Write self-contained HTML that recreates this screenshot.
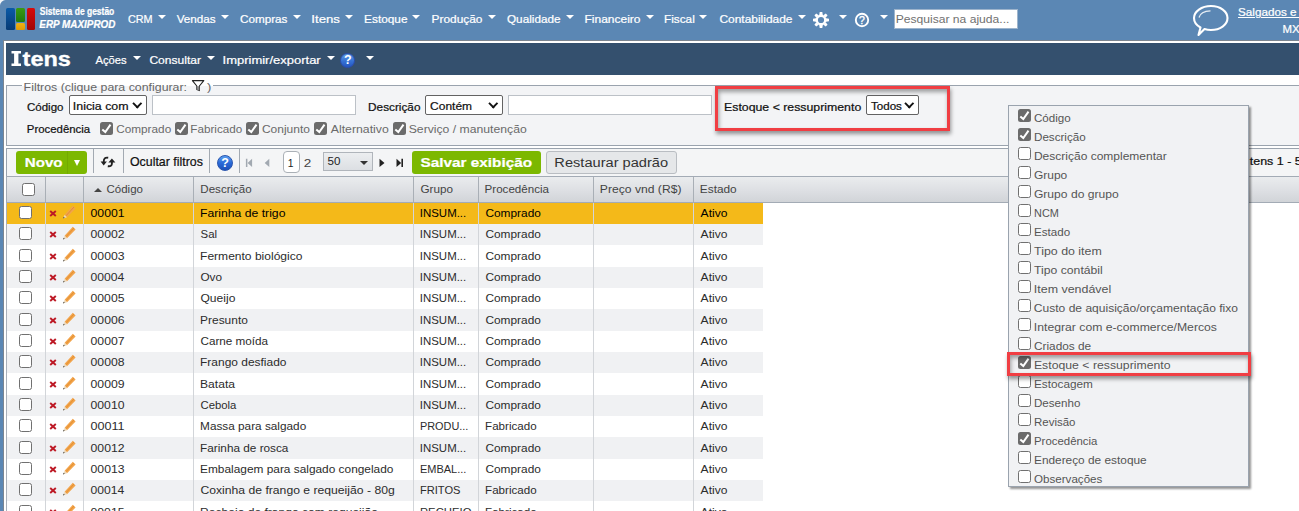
<!DOCTYPE html>
<html><head><meta charset="utf-8"><title>Itens</title><style>*{box-sizing:border-box;margin:0;padding:0}
html,body{width:1299px;height:511px;overflow:hidden;background:#5b87b4;font-family:"Liberation Sans",sans-serif;font-size:12px;color:#222}
span.x{z-index:3;position:absolute;white-space:nowrap;line-height:20px;transform-origin:0 50%;display:block}
#top{position:absolute;left:0;top:0;width:1299px;height:41px;background:#5b87b4}
#corner{position:absolute;left:0;top:0;width:6px;height:6px;background:radial-gradient(circle at 6px 6px,#5b87b4 5.5px,#f4f6f8 6.5px)}
.lg{position:absolute;border-radius:1.5px}
.tri{position:absolute;width:0;height:0;border-left:4.25px solid transparent;border-right:4.25px solid transparent;border-top:4.5px solid #fff}
#search{position:absolute;left:894px;top:8.8px;width:124px;height:20px;background:#fff;border:1px solid #9db4cc}
#panel{position:absolute;left:3px;top:40px;width:1300px;height:480px;background:#fff;border:1px solid #7c8590}
#hdr{position:absolute;left:6px;top:43px;width:1293px;height:32px;background:#34506e}
.qi{position:absolute;width:15.4px;height:15.4px;border-radius:50%;background:linear-gradient(#5e9ce4,#3672d4 55%,#2456c0);border:1px solid #2a4eb0;}
.qi:after{content:"?";position:absolute;left:0;top:0;width:13.4px;text-align:center;color:#fff;font-weight:bold;font-size:12.5px;line-height:13.6px}
.qi.big{width:16px;height:16px;border:1px solid #2a55ae;background:linear-gradient(#5b9ff0,#2a6ad8 50%,#1c50b8)}
.qi.big:after{width:14px;font-size:12.5px;line-height:14.5px}
#fs{position:absolute;left:6px;top:85px;width:1300px;height:61px;border:1px solid #9aa3ae;background:#f3f4f6}
#legend{position:absolute;left:22px;top:78px;width:191px;height:16px;background:linear-gradient(#fff 8px,#f3f4f6 8px)}
.sel{position:absolute;height:20px;border:1px solid #636363;border-radius:2px;background:#fff}
.sel i{position:absolute;right:5.4px;top:4.1px;width:6.5px;height:6.5px;border-right:2.3px solid #111;border-bottom:2.3px solid #111;transform:rotate(45deg)}
.inp{position:absolute;height:19.5px;border:1px solid #bcc1c7;background:#fff}
.red{z-index:4;position:absolute;border:3px solid #f03e43;box-shadow:1px 3px 4px rgba(0,0,0,.4),inset 1px 3px 4px rgba(0,0,0,.36)}
.cb{z-index:2;position:absolute;width:13px;height:13px;border:1.2px solid #707070;border-radius:2.5px;background:#fff}
.cbk{z-index:2;position:absolute;width:13px;height:13px;border-radius:2.5px;background:#6b6b6b}
.cbk svg{position:absolute;left:0;top:0}
#tb{position:absolute;left:6px;top:148px;width:1300px;height:29px;background:#f4f5f6;border-top:1px solid #9aa3ae;border-left:1px solid #9aa3ae}
#novo{position:absolute;left:16px;top:151px;width:71px;height:23px;border-radius:3px;background:#7cb800}
#novo b{position:absolute;left:51px;top:0px;width:1px;height:23px;background:#74aa00}
#novo em{position:absolute;left:57.7px;top:9.2px;border-left:3.2px solid transparent;border-right:3.2px solid transparent;border-top:6px solid #fff}
.vsep{position:absolute;top:149px;width:1px;height:24px;background:#a3aab2}
#pg1{position:absolute;left:283px;top:151px;width:17px;height:22px;border:1px solid #aab0b6;border-radius:4px;background:#fff}
#psel{position:absolute;left:323px;top:152px;width:50px;height:19px;border:1px solid #b0b5bb;background:linear-gradient(#eceef0,#dcdfe3)}
#psel i{position:absolute;right:4.5px;top:8px;border-left:4.2px solid transparent;border-right:4.2px solid transparent;border-top:4.2px solid #333}
#salvar{position:absolute;left:412px;top:151px;width:129px;height:23px;border-radius:3px;background:#7cb800}
#rest{position:absolute;left:546px;top:151px;width:131px;height:23px;border-radius:3px;background:#e5e7e9;border:1px solid #b9bdc2}
#gh{position:absolute;left:6px;top:176px;width:1300px;height:27px;background:linear-gradient(#eaecee,#dddfe3 55%,#d1d4d8);border-top:1px solid #a3abb5;border-bottom:1px solid #a3abb5;border-left:1px solid #a3abb5}
.hsep{position:absolute;top:177px;width:1px;height:25px;background:#a9afb6}
.upt{position:absolute;border-left:4.4px solid transparent;border-right:4.4px solid transparent;border-bottom:4.5px solid #444}
.row{position:absolute;left:7px;width:756px}
.sel0{background:#f4b919}
.alt{background:#f0f1f3}
.wht{background:#fff}
svg.x,svg.pen{position:absolute}
.rsep{position:absolute;top:203px;width:1px;height:320px;background:#d2d5d9}
#pop{z-index:1;position:absolute;left:1008px;top:105px;width:241px;height:382px;background:#f1f2f4;border:1px solid #9aa3ae;box-shadow:2px 2px 2px rgba(0,0,0,.42)}
</style></head><body>
<div id="top"></div><div id="corner"></div>
<div class="lg" style="left:6px;top:8px;width:9px;height:22px;background:linear-gradient(#0a5aa8,#073a74)"></div>
<div class="lg" style="left:16px;top:8px;width:9px;height:14px;background:linear-gradient(#3a9a12,#1f7a0c)"></div>
<div class="lg" style="left:16px;top:23px;width:9px;height:7px;background:linear-gradient(#f0b012,#e09a08)"></div>
<div class="lg" style="left:26.5px;top:8px;width:8.5px;height:22px;background:linear-gradient(#d80a0a,#a00606)"></div>
<div class="tri" style="left:158px;top:15px;"></div>
<div class="tri" style="left:221px;top:15px;"></div>
<div class="tri" style="left:292.5px;top:15px;"></div>
<div class="tri" style="left:345px;top:15px;"></div>
<div class="tri" style="left:412px;top:15px;"></div>
<div class="tri" style="left:487.5px;top:15px;"></div>
<div class="tri" style="left:565.5px;top:15px;"></div>
<div class="tri" style="left:645.5px;top:15px;"></div>
<div class="tri" style="left:699px;top:15px;"></div>
<div class="tri" style="left:797.5px;top:15px;"></div>
<svg style="position:absolute;left:812px;top:10.9px" width="18" height="18" viewBox="-9 -9 18 18"><circle r="4.25" fill="none" stroke="#fff" stroke-width="2.3"/><g fill="#fff"><path d="M-1.75 -5L-1.3 -8H1.3L1.75 -5Z" transform="rotate(0)"/><path d="M-1.75 -5L-1.3 -8H1.3L1.75 -5Z" transform="rotate(45)"/><path d="M-1.75 -5L-1.3 -8H1.3L1.75 -5Z" transform="rotate(90)"/><path d="M-1.75 -5L-1.3 -8H1.3L1.75 -5Z" transform="rotate(135)"/><path d="M-1.75 -5L-1.3 -8H1.3L1.75 -5Z" transform="rotate(180)"/><path d="M-1.75 -5L-1.3 -8H1.3L1.75 -5Z" transform="rotate(225)"/><path d="M-1.75 -5L-1.3 -8H1.3L1.75 -5Z" transform="rotate(270)"/><path d="M-1.75 -5L-1.3 -8H1.3L1.75 -5Z" transform="rotate(315)"/></g></svg>
<div class="tri" style="left:838.5px;top:15px;"></div>
<svg style="position:absolute;left:854px;top:12px" width="16" height="16" viewBox="0 0 16 16"><circle cx="8" cy="8" r="6.2" fill="none" stroke="#fff" stroke-width="1.9"/><text x="8" y="11.6" font-family="Liberation Sans" font-size="10.5" fill="#fff" stroke="#fff" stroke-width=".35" text-anchor="middle">?</text></svg>
<div class="tri" style="left:879.6px;top:15px;"></div>
<div id="search"></div>
<svg style="position:absolute;left:1192px;top:4px" width="38" height="34" viewBox="0 0 38 34"><path d="M19 2C28.5 2 35.5 7.5 35.5 14C35.5 21 28 26 19 26C16.5 26 14.5 25.7 12.5 25L6.5 31L8.5 23.5C4.3 21.2 2 17.8 2 14C2 7.5 9.5 2 19 2Z" fill="none" stroke="#fff" stroke-width="2.1" stroke-linejoin="round"/><path d="M7 13.5C8 9.5 12.5 7 18.5 6.8" fill="none" stroke="#fff" stroke-width="1.3" opacity=".85"/></svg>
<div id="panel"></div><div id="hdr"></div>
<svg style="position:absolute;left:10px;top:49px" width="13" height="19" viewBox="0 0 13 19"><path d="M1.5 1.9h9.5v2.7h-2.6v9.8h2.6v2.7h-9.5v-2.7h2.6v-9.8h-2.6z" fill="#fff"/></svg>
<div class="tri" style="left:133px;top:55.7px;"></div>
<div class="tri" style="left:206.5px;top:55.7px;"></div>
<div class="tri" style="left:326.7px;top:55.7px;"></div>
<div class="tri" style="left:365.6px;top:55.7px;"></div>
<div class="qi" style="left:340px;top:53px;"></div>
<div id="fs"></div>
<div id="legend"></div>
<svg style="position:absolute;left:191px;top:79px;z-index:3" width="14" height="13" viewBox="0 0 14 13"><path d="M1.4 1.6h11.4L8.4 7v4.6L5.8 10.6V7Z" fill="none" stroke="#222" stroke-width="1.1" stroke-linejoin="round"/><path d="M5.8 7.2h2.6v4.4L5.8 10.6Z" fill="#888"/></svg>
<div class="sel" style="left:69px;top:95px;width:78px;"><i></i></div>
<div class="inp" style="left:152px;top:95px;width:204px;"></div>
<div class="sel" style="left:425px;top:95px;width:78px;"><i></i></div>
<div class="inp" style="left:508px;top:95px;width:204px;"></div>
<div class="sel" style="left:866px;top:95px;width:53px;"><i></i></div>
<div class="cbk" style="left:100px;top:122px;"><svg width="13" height="13" viewBox="0 0 13 13"><path d="M2.3 7.4L5.3 10L10.5 2.6" fill="none" stroke="#fff" stroke-width="2"/></svg></div>
<div class="cbk" style="left:175px;top:122px;"><svg width="13" height="13" viewBox="0 0 13 13"><path d="M2.3 7.4L5.3 10L10.5 2.6" fill="none" stroke="#fff" stroke-width="2"/></svg></div>
<div class="cbk" style="left:245.5px;top:122px;"><svg width="13" height="13" viewBox="0 0 13 13"><path d="M2.3 7.4L5.3 10L10.5 2.6" fill="none" stroke="#fff" stroke-width="2"/></svg></div>
<div class="cbk" style="left:314px;top:122px;"><svg width="13" height="13" viewBox="0 0 13 13"><path d="M2.3 7.4L5.3 10L10.5 2.6" fill="none" stroke="#fff" stroke-width="2"/></svg></div>
<div class="cbk" style="left:393px;top:122px;"><svg width="13" height="13" viewBox="0 0 13 13"><path d="M2.3 7.4L5.3 10L10.5 2.6" fill="none" stroke="#fff" stroke-width="2"/></svg></div>
<div id="tb"></div>
<div id="novo"><b></b><em></em></div>
<div class="vsep" style="left:93px"></div>
<div class="vsep" style="left:123px"></div>
<div class="vsep" style="left:209px"></div>
<div class="vsep" style="left:239px"></div>
<svg style="position:absolute;left:100px;top:156px" width="17" height="12" viewBox="0 0 17 12"><g fill="none" stroke="#222" stroke-width="1.9"><path d="M8.2 1.7C5 1.2 3.7 2.6 3.7 6"/><path d="M11.9 6v1.5C11.9 9.6 10.6 10.6 7.8 10.2"/></g><path d="M0.6 5.4h6.3L3.7 9.4Z M8.4 6.6h7L11.9 2.6Z" fill="#222"/></svg>
<div class="qi big" style="left:217px;top:155px;"></div>
<svg style="position:absolute;left:244px;top:158px" width="30" height="10" viewBox="0 0 30 10"><path d="M1.9 0.8h1.5v8.2H1.9Z M8.1 0.8v8.2L3.6 4.9Z M25.3 0.8v8.2L20.7 4.9Z" fill="#a2a9b1"/></svg>
<div id="pg1"></div>
<div id="psel"><i></i></div>
<svg style="position:absolute;left:379px;top:158px" width="30" height="10" viewBox="0 0 30 10"><path d="M0.5 0.8v8.2L5.5 4.9Z M17.5 0.8v8.2L22.2 4.9Z M22.4 0.8h1.6v8.2h-1.6Z" fill="#222"/></svg>
<div id="salvar"></div>
<div id="rest"></div>
<div id="gh"></div>
<div class="hsep" style="left:45px"></div>
<div class="hsep" style="left:83px"></div>
<div class="hsep" style="left:193px"></div>
<div class="hsep" style="left:413px"></div>
<div class="hsep" style="left:478px"></div>
<div class="hsep" style="left:593px"></div>
<div class="hsep" style="left:693px"></div>
<div class="cb" style="left:22px;top:183px;"></div>
<div class="upt" style="left:93.5px;top:187.5px;"></div>
<div class="row sel0" style="top:203px;height:21px"></div>
<div class="cb" style="left:19px;top:205.9px;"></div>
<svg class="x" style="left:49px;top:210.1px" width="8" height="7" viewBox="0 0 8 7"><path d="M1.2 1L6.8 6M6.8 1L1.2 6" stroke="#bd1a26" stroke-width="1.9"/></svg>
<svg class="pen" style="left:62px;top:205.1px" width="15" height="14" viewBox="0 0 15 14"><path d="M2.6 9.8L10.8 0.8L13.6 3.4L5 12.2Z" fill="#f2a44c"/><path d="M4 10.8L12 2" stroke="#e08a28" stroke-width=".8"/><path d="M2.6 9.8L5 12.2L1 13.4Z" fill="#ecd8b8"/><path d="M1 13.4l0.7-1.6 1 1z" fill="#333"/></svg>
<div class="row alt" style="top:224px;height:21px"></div>
<div class="cb" style="left:19px;top:227.2px;"></div>
<svg class="x" style="left:49px;top:231.4px" width="8" height="7" viewBox="0 0 8 7"><path d="M1.2 1L6.8 6M6.8 1L1.2 6" stroke="#bd1a26" stroke-width="1.9"/></svg>
<svg class="pen" style="left:62px;top:226.4px" width="15" height="14" viewBox="0 0 15 14"><path d="M2.6 9.8L10.8 0.8L13.6 3.4L5 12.2Z" fill="#f2a44c"/><path d="M4 10.8L12 2" stroke="#e08a28" stroke-width=".8"/><path d="M2.6 9.8L5 12.2L1 13.4Z" fill="#ecd8b8"/><path d="M1 13.4l0.7-1.6 1 1z" fill="#333"/></svg>
<div class="row wht" style="top:245px;height:22px"></div>
<div class="cb" style="left:19px;top:248.6px;"></div>
<svg class="x" style="left:49px;top:252.8px" width="8" height="7" viewBox="0 0 8 7"><path d="M1.2 1L6.8 6M6.8 1L1.2 6" stroke="#bd1a26" stroke-width="1.9"/></svg>
<svg class="pen" style="left:62px;top:247.8px" width="15" height="14" viewBox="0 0 15 14"><path d="M2.6 9.8L10.8 0.8L13.6 3.4L5 12.2Z" fill="#f2a44c"/><path d="M4 10.8L12 2" stroke="#e08a28" stroke-width=".8"/><path d="M2.6 9.8L5 12.2L1 13.4Z" fill="#ecd8b8"/><path d="M1 13.4l0.7-1.6 1 1z" fill="#333"/></svg>
<div class="row alt" style="top:267px;height:21px"></div>
<div class="cb" style="left:19px;top:269.9px;"></div>
<svg class="x" style="left:49px;top:274.1px" width="8" height="7" viewBox="0 0 8 7"><path d="M1.2 1L6.8 6M6.8 1L1.2 6" stroke="#bd1a26" stroke-width="1.9"/></svg>
<svg class="pen" style="left:62px;top:269.1px" width="15" height="14" viewBox="0 0 15 14"><path d="M2.6 9.8L10.8 0.8L13.6 3.4L5 12.2Z" fill="#f2a44c"/><path d="M4 10.8L12 2" stroke="#e08a28" stroke-width=".8"/><path d="M2.6 9.8L5 12.2L1 13.4Z" fill="#ecd8b8"/><path d="M1 13.4l0.7-1.6 1 1z" fill="#333"/></svg>
<div class="row wht" style="top:288px;height:21px"></div>
<div class="cb" style="left:19px;top:291.2px;"></div>
<svg class="x" style="left:49px;top:295.4px" width="8" height="7" viewBox="0 0 8 7"><path d="M1.2 1L6.8 6M6.8 1L1.2 6" stroke="#bd1a26" stroke-width="1.9"/></svg>
<svg class="pen" style="left:62px;top:290.4px" width="15" height="14" viewBox="0 0 15 14"><path d="M2.6 9.8L10.8 0.8L13.6 3.4L5 12.2Z" fill="#f2a44c"/><path d="M4 10.8L12 2" stroke="#e08a28" stroke-width=".8"/><path d="M2.6 9.8L5 12.2L1 13.4Z" fill="#ecd8b8"/><path d="M1 13.4l0.7-1.6 1 1z" fill="#333"/></svg>
<div class="row alt" style="top:309px;height:22px"></div>
<div class="cb" style="left:19px;top:312.5px;"></div>
<svg class="x" style="left:49px;top:316.7px" width="8" height="7" viewBox="0 0 8 7"><path d="M1.2 1L6.8 6M6.8 1L1.2 6" stroke="#bd1a26" stroke-width="1.9"/></svg>
<svg class="pen" style="left:62px;top:311.7px" width="15" height="14" viewBox="0 0 15 14"><path d="M2.6 9.8L10.8 0.8L13.6 3.4L5 12.2Z" fill="#f2a44c"/><path d="M4 10.8L12 2" stroke="#e08a28" stroke-width=".8"/><path d="M2.6 9.8L5 12.2L1 13.4Z" fill="#ecd8b8"/><path d="M1 13.4l0.7-1.6 1 1z" fill="#333"/></svg>
<div class="row wht" style="top:331px;height:21px"></div>
<div class="cb" style="left:19px;top:333.9px;"></div>
<svg class="x" style="left:49px;top:338.1px" width="8" height="7" viewBox="0 0 8 7"><path d="M1.2 1L6.8 6M6.8 1L1.2 6" stroke="#bd1a26" stroke-width="1.9"/></svg>
<svg class="pen" style="left:62px;top:333.1px" width="15" height="14" viewBox="0 0 15 14"><path d="M2.6 9.8L10.8 0.8L13.6 3.4L5 12.2Z" fill="#f2a44c"/><path d="M4 10.8L12 2" stroke="#e08a28" stroke-width=".8"/><path d="M2.6 9.8L5 12.2L1 13.4Z" fill="#ecd8b8"/><path d="M1 13.4l0.7-1.6 1 1z" fill="#333"/></svg>
<div class="row alt" style="top:352px;height:21px"></div>
<div class="cb" style="left:19px;top:355.2px;"></div>
<svg class="x" style="left:49px;top:359.4px" width="8" height="7" viewBox="0 0 8 7"><path d="M1.2 1L6.8 6M6.8 1L1.2 6" stroke="#bd1a26" stroke-width="1.9"/></svg>
<svg class="pen" style="left:62px;top:354.4px" width="15" height="14" viewBox="0 0 15 14"><path d="M2.6 9.8L10.8 0.8L13.6 3.4L5 12.2Z" fill="#f2a44c"/><path d="M4 10.8L12 2" stroke="#e08a28" stroke-width=".8"/><path d="M2.6 9.8L5 12.2L1 13.4Z" fill="#ecd8b8"/><path d="M1 13.4l0.7-1.6 1 1z" fill="#333"/></svg>
<div class="row wht" style="top:373px;height:22px"></div>
<div class="cb" style="left:19px;top:376.5px;"></div>
<svg class="x" style="left:49px;top:380.7px" width="8" height="7" viewBox="0 0 8 7"><path d="M1.2 1L6.8 6M6.8 1L1.2 6" stroke="#bd1a26" stroke-width="1.9"/></svg>
<svg class="pen" style="left:62px;top:375.7px" width="15" height="14" viewBox="0 0 15 14"><path d="M2.6 9.8L10.8 0.8L13.6 3.4L5 12.2Z" fill="#f2a44c"/><path d="M4 10.8L12 2" stroke="#e08a28" stroke-width=".8"/><path d="M2.6 9.8L5 12.2L1 13.4Z" fill="#ecd8b8"/><path d="M1 13.4l0.7-1.6 1 1z" fill="#333"/></svg>
<div class="row alt" style="top:395px;height:21px"></div>
<div class="cb" style="left:19px;top:397.9px;"></div>
<svg class="x" style="left:49px;top:402.1px" width="8" height="7" viewBox="0 0 8 7"><path d="M1.2 1L6.8 6M6.8 1L1.2 6" stroke="#bd1a26" stroke-width="1.9"/></svg>
<svg class="pen" style="left:62px;top:397.1px" width="15" height="14" viewBox="0 0 15 14"><path d="M2.6 9.8L10.8 0.8L13.6 3.4L5 12.2Z" fill="#f2a44c"/><path d="M4 10.8L12 2" stroke="#e08a28" stroke-width=".8"/><path d="M2.6 9.8L5 12.2L1 13.4Z" fill="#ecd8b8"/><path d="M1 13.4l0.7-1.6 1 1z" fill="#333"/></svg>
<div class="row wht" style="top:416px;height:21px"></div>
<div class="cb" style="left:19px;top:419.2px;"></div>
<svg class="x" style="left:49px;top:423.4px" width="8" height="7" viewBox="0 0 8 7"><path d="M1.2 1L6.8 6M6.8 1L1.2 6" stroke="#bd1a26" stroke-width="1.9"/></svg>
<svg class="pen" style="left:62px;top:418.4px" width="15" height="14" viewBox="0 0 15 14"><path d="M2.6 9.8L10.8 0.8L13.6 3.4L5 12.2Z" fill="#f2a44c"/><path d="M4 10.8L12 2" stroke="#e08a28" stroke-width=".8"/><path d="M2.6 9.8L5 12.2L1 13.4Z" fill="#ecd8b8"/><path d="M1 13.4l0.7-1.6 1 1z" fill="#333"/></svg>
<div class="row alt" style="top:437px;height:22px"></div>
<div class="cb" style="left:19px;top:440.5px;"></div>
<svg class="x" style="left:49px;top:444.7px" width="8" height="7" viewBox="0 0 8 7"><path d="M1.2 1L6.8 6M6.8 1L1.2 6" stroke="#bd1a26" stroke-width="1.9"/></svg>
<svg class="pen" style="left:62px;top:439.7px" width="15" height="14" viewBox="0 0 15 14"><path d="M2.6 9.8L10.8 0.8L13.6 3.4L5 12.2Z" fill="#f2a44c"/><path d="M4 10.8L12 2" stroke="#e08a28" stroke-width=".8"/><path d="M2.6 9.8L5 12.2L1 13.4Z" fill="#ecd8b8"/><path d="M1 13.4l0.7-1.6 1 1z" fill="#333"/></svg>
<div class="row wht" style="top:459px;height:21px"></div>
<div class="cb" style="left:19px;top:461.9px;"></div>
<svg class="x" style="left:49px;top:466.1px" width="8" height="7" viewBox="0 0 8 7"><path d="M1.2 1L6.8 6M6.8 1L1.2 6" stroke="#bd1a26" stroke-width="1.9"/></svg>
<svg class="pen" style="left:62px;top:461.1px" width="15" height="14" viewBox="0 0 15 14"><path d="M2.6 9.8L10.8 0.8L13.6 3.4L5 12.2Z" fill="#f2a44c"/><path d="M4 10.8L12 2" stroke="#e08a28" stroke-width=".8"/><path d="M2.6 9.8L5 12.2L1 13.4Z" fill="#ecd8b8"/><path d="M1 13.4l0.7-1.6 1 1z" fill="#333"/></svg>
<div class="row alt" style="top:480px;height:21px"></div>
<div class="cb" style="left:19px;top:483.2px;"></div>
<svg class="x" style="left:49px;top:487.4px" width="8" height="7" viewBox="0 0 8 7"><path d="M1.2 1L6.8 6M6.8 1L1.2 6" stroke="#bd1a26" stroke-width="1.9"/></svg>
<svg class="pen" style="left:62px;top:482.4px" width="15" height="14" viewBox="0 0 15 14"><path d="M2.6 9.8L10.8 0.8L13.6 3.4L5 12.2Z" fill="#f2a44c"/><path d="M4 10.8L12 2" stroke="#e08a28" stroke-width=".8"/><path d="M2.6 9.8L5 12.2L1 13.4Z" fill="#ecd8b8"/><path d="M1 13.4l0.7-1.6 1 1z" fill="#333"/></svg>
<div class="row wht" style="top:501px;height:22px"></div>
<div class="cb" style="left:19px;top:504.5px;"></div>
<svg class="x" style="left:49px;top:508.7px" width="8" height="7" viewBox="0 0 8 7"><path d="M1.2 1L6.8 6M6.8 1L1.2 6" stroke="#bd1a26" stroke-width="1.9"/></svg>
<svg class="pen" style="left:62px;top:503.7px" width="15" height="14" viewBox="0 0 15 14"><path d="M2.6 9.8L10.8 0.8L13.6 3.4L5 12.2Z" fill="#f2a44c"/><path d="M4 10.8L12 2" stroke="#e08a28" stroke-width=".8"/><path d="M2.6 9.8L5 12.2L1 13.4Z" fill="#ecd8b8"/><path d="M1 13.4l0.7-1.6 1 1z" fill="#333"/></svg>
<div class="rsep" style="left:45px"></div>
<div class="rsep" style="left:83px"></div>
<div class="rsep" style="left:193px"></div>
<div class="rsep" style="left:413px"></div>
<div class="rsep" style="left:478px"></div>
<div class="rsep" style="left:593px"></div>
<div class="rsep" style="left:693px"></div>
<div style="position:absolute;left:6px;top:203px;width:1px;height:310px;background:#a9b0ba"></div>
<div id="pop"></div>
<div class="cbk" style="left:1018px;top:109px"><svg width="13" height="13" viewBox="0 0 13 13"><path d="M2.3 7.4L5.3 10L10.5 2.6" fill="none" stroke="#fff" stroke-width="2"/></svg></div>
<div class="cbk" style="left:1018px;top:128px"><svg width="13" height="13" viewBox="0 0 13 13"><path d="M2.3 7.4L5.3 10L10.5 2.6" fill="none" stroke="#fff" stroke-width="2"/></svg></div>
<div class="cb" style="left:1018px;top:147px"></div>
<div class="cb" style="left:1018px;top:166px"></div>
<div class="cb" style="left:1018px;top:185px"></div>
<div class="cb" style="left:1018px;top:204px"></div>
<div class="cb" style="left:1018px;top:223px"></div>
<div class="cb" style="left:1018px;top:242px"></div>
<div class="cb" style="left:1018px;top:261px"></div>
<div class="cb" style="left:1018px;top:280px"></div>
<div class="cb" style="left:1018px;top:299px"></div>
<div class="cb" style="left:1018px;top:318px"></div>
<div class="cb" style="left:1018px;top:337px"></div>
<div class="cbk" style="left:1018px;top:356px"><svg width="13" height="13" viewBox="0 0 13 13"><path d="M2.3 7.4L5.3 10L10.5 2.6" fill="none" stroke="#fff" stroke-width="2"/></svg></div>
<div class="cb" style="left:1018px;top:375px"></div>
<div class="cb" style="left:1018px;top:394px"></div>
<div class="cb" style="left:1018px;top:413px"></div>
<div class="cbk" style="left:1018px;top:432px"><svg width="13" height="13" viewBox="0 0 13 13"><path d="M2.3 7.4L5.3 10L10.5 2.6" fill="none" stroke="#fff" stroke-width="2"/></svg></div>
<div class="cb" style="left:1018px;top:451px"></div>
<div class="cb" style="left:1018px;top:470px"></div>
<div class="red" style="left:1007px;top:352px;width:244px;height:24px;"></div>
<div class="red" style="left:715px;top:86px;width:235px;height:44.5px;"></div>
<span class="x" style="left:39px;top:6px;line-height:11px;font-size:10px;color:#fff;transform:translateX(0.79px) scaleX(0.8486);font-weight:bold;-webkit-text-stroke:0.22px;">Sistema de gestão</span>
<span class="x" style="left:39px;top:18px;line-height:12px;font-size:11px;color:#fff;transform:translateX(0.37px) scaleX(0.8993);font-weight:bold;font-style:italic;-webkit-text-stroke:0.22px;">ERP MAXIPROD</span>
<span class="x" style="left:127px;top:13px;line-height:12px;font-size:11.5px;color:#fff;transform:translateX(0.98px) scaleX(0.9409);-webkit-text-stroke:0.22px;">CRM</span>
<span class="x" style="left:176px;top:13px;line-height:12px;font-size:11.5px;color:#fff;transform:translateX(0.70px) scaleX(1.0153);-webkit-text-stroke:0.22px;">Vendas</span>
<span class="x" style="left:239px;top:13px;line-height:12px;font-size:11.5px;color:#fff;transform:translateX(0.94px) scaleX(1.0175);-webkit-text-stroke:0.22px;">Compras</span>
<span class="x" style="left:311px;top:13px;line-height:12px;font-size:11.5px;color:#fff;transform:translateX(0.29px) scaleX(1.1498);-webkit-text-stroke:0.22px;">Itens</span>
<span class="x" style="left:364px;top:13px;line-height:12px;font-size:11.5px;color:#fff;transform:translateX(0.07px) scaleX(1.0293);-webkit-text-stroke:0.22px;">Estoque</span>
<span class="x" style="left:431px;top:13px;line-height:12px;font-size:11.5px;color:#fff;transform:translateX(0.57px) scaleX(1.0338);-webkit-text-stroke:0.22px;">Produção</span>
<span class="x" style="left:506px;top:13px;line-height:12px;font-size:11.5px;color:#fff;transform:translateX(0.99px) scaleX(1.0207);-webkit-text-stroke:0.22px;">Qualidade</span>
<span class="x" style="left:584px;top:13px;line-height:12px;font-size:11.5px;color:#fff;transform:translateX(0.56px) scaleX(1.0411);-webkit-text-stroke:0.22px;">Financeiro</span>
<span class="x" style="left:664px;top:13px;line-height:12px;font-size:11.5px;color:#fff;transform:translateX(0.08px) scaleX(1.0220);-webkit-text-stroke:0.22px;">Fiscal</span>
<span class="x" style="left:719px;top:13px;line-height:12px;font-size:11.5px;color:#fff;transform:translateX(0.43px) scaleX(1.0392);-webkit-text-stroke:0.22px;">Contabilidade</span>
<span class="x" style="left:895px;top:13px;line-height:12px;font-size:11.2px;color:#707070;transform:translateX(0.63px) scaleX(1.0822);">Pesquisar na ajuda...</span>
<span class="x" style="left:1237px;top:6px;line-height:12px;font-size:11.5px;color:#fff;transform:translateX(0.99px) scaleX(1.0168);-webkit-text-stroke:0.22px;text-decoration:underline;">Salgados e Cia</span>
<span class="x" style="left:1282px;top:23px;line-height:12px;font-size:11.5px;color:#fff;transform:translateX(0.61px) scaleX(0.9920);-webkit-text-stroke:0.22px;">MXM</span>
<span class="x" style="left:22px;top:47px;line-height:23px;font-size:20.5px;color:#fff;transform:translateX(0.60px) scaleX(1.1471);font-weight:bold;-webkit-text-stroke:0.3px #fff;">tens</span>
<span class="x" style="left:95px;top:54px;line-height:12px;font-size:11.5px;color:#fff;transform:translateX(0.50px) scaleX(0.9743);-webkit-text-stroke:0.22px;">Ações</span>
<span class="x" style="left:149px;top:54px;line-height:12px;font-size:11.5px;color:#fff;transform:translateX(0.42px) scaleX(1.0467);-webkit-text-stroke:0.22px;">Consultar</span>
<span class="x" style="left:222px;top:54px;line-height:12px;font-size:11.5px;color:#fff;transform:translateX(0.56px) scaleX(1.1293);-webkit-text-stroke:0.22px;">Imprimir/exportar</span>
<span class="x" style="left:23px;top:81px;line-height:12px;font-size:11.3px;color:#666;transform:translateX(0.62px) scaleX(1.0936);">Filtros (clique para configurar:</span>
<span class="x" style="left:206px;top:81px;line-height:12px;font-size:11.3px;color:#666;transform:translateX(0.94px) scaleX(1.1475);">)</span>
<span class="x" style="left:26px;top:101px;line-height:12px;font-size:11.5px;color:#111;transform:translateX(0.95px) scaleX(1.0015);-webkit-text-stroke:0.22px;">Código</span>
<span class="x" style="left:72px;top:100px;line-height:12px;font-size:11.3px;color:#111;transform:translateX(0.80px) scaleX(1.0966);-webkit-text-stroke:0.22px;">Inicia com</span>
<span class="x" style="left:368px;top:101px;line-height:12px;font-size:11.5px;color:#111;transform:translateX(0.08px) scaleX(1.0245);-webkit-text-stroke:0.22px;">Descrição</span>
<span class="x" style="left:430px;top:100px;line-height:12px;font-size:11.3px;color:#111;transform:translateX(0.12px) scaleX(1.0586);-webkit-text-stroke:0.22px;">Contém</span>
<span class="x" style="left:724px;top:101px;line-height:12px;font-size:11.5px;color:#111;transform:translateX(0.04px) scaleX(1.0704);-webkit-text-stroke:0.22px;">Estoque &lt; ressuprimento</span>
<span class="x" style="left:870px;top:100px;line-height:12px;font-size:11.3px;color:#111;transform:translateX(0.94px) scaleX(1.0270);-webkit-text-stroke:0.22px;">Todos</span>
<span class="x" style="left:26px;top:123px;line-height:12px;font-size:11.5px;color:#111;transform:translateX(0.81px) scaleX(0.9915);-webkit-text-stroke:0.22px;">Procedência</span>
<span class="x" style="left:116px;top:123px;line-height:12px;font-size:11.5px;color:#6a6a6a;transform:translateX(0.19px) scaleX(1.0247);">Comprado</span>
<span class="x" style="left:190px;top:123px;line-height:12px;font-size:11.5px;color:#6a6a6a;transform:translateX(0.34px) scaleX(1.0142);">Fabricado</span>
<span class="x" style="left:261px;top:123px;line-height:12px;font-size:11.5px;color:#6a6a6a;transform:translateX(0.93px) scaleX(1.0436);">Conjunto</span>
<span class="x" style="left:330px;top:123px;line-height:12px;font-size:11.5px;color:#6a6a6a;transform:translateX(0.75px) scaleX(1.0670);">Alternativo</span>
<span class="x" style="left:408px;top:123px;line-height:12px;font-size:11.5px;color:#6a6a6a;transform:translateX(0.72px) scaleX(1.0609);">Serviço / manutenção</span>
<span class="x" style="left:24px;top:156px;line-height:14px;font-size:12.5px;color:#fff;transform:translateX(0.73px) scaleX(1.2114);font-weight:bold;-webkit-text-stroke:0.22px;">Novo</span>
<span class="x" style="left:129px;top:155px;line-height:14px;font-size:12.2px;color:#111;transform:translateX(0.94px) scaleX(1.0154);-webkit-text-stroke:0.22px;">Ocultar filtros</span>
<span class="x" style="left:287px;top:157px;line-height:12px;font-size:11.5px;color:#222;transform:translateX(0.74px) scaleX(0.9000);">1</span>
<span class="x" style="left:303px;top:157px;line-height:12px;font-size:11.5px;color:#444;transform:translateX(0.85px) scaleX(1.1792);">2</span>
<span class="x" style="left:327px;top:155px;line-height:12px;font-size:11.5px;color:#222;transform:translateX(0.55px) scaleX(1.0088);">50</span>
<span class="x" style="left:420px;top:156px;line-height:14px;font-size:12.5px;color:#fff;transform:translateX(0.57px) scaleX(1.2252);font-weight:bold;-webkit-text-stroke:0.22px;">Salvar exibição</span>
<span class="x" style="left:554px;top:156px;line-height:14px;font-size:12.5px;color:#333;transform:translateX(0.33px) scaleX(1.1694);">Restaurar padrão</span>
<span class="x" style="left:1249px;top:155px;line-height:12px;font-size:10.8px;color:#111;transform:translateX(0.83px) scaleX(1.1519);-webkit-text-stroke:0.22px;z-index:0;">tens 1 - 50 de 63</span>
<span class="x" style="left:106px;top:183px;line-height:12px;font-size:11.5px;color:#444;transform:translateX(0.45px) scaleX(1.0015);">Código</span>
<span class="x" style="left:200px;top:183px;line-height:12px;font-size:11.5px;color:#444;transform:translateX(0.35px) scaleX(1.0044);">Descrição</span>
<span class="x" style="left:420px;top:183px;line-height:12px;font-size:11.5px;color:#444;transform:translateX(0.44px) scaleX(1.0172);">Grupo</span>
<span class="x" style="left:484px;top:183px;line-height:12px;font-size:11.5px;color:#444;transform:translateX(0.59px) scaleX(1.0074);">Procedência</span>
<span class="x" style="left:599px;top:183px;line-height:12px;font-size:11.5px;color:#444;transform:translateX(0.80px) scaleX(1.0561);">Preço vnd (R$)</span>
<span class="x" style="left:699px;top:183px;line-height:12px;font-size:11.5px;color:#444;transform:translateX(0.82px) scaleX(1.0303);">Estado</span>
<span class="x" style="left:90px;top:207px;line-height:12px;font-size:10.8px;color:#000;transform:translateX(0.55px) scaleX(1.1330);">00001</span>
<span class="x" style="left:200px;top:207px;line-height:12px;font-size:10.8px;color:#000;transform:translateX(0.04px) scaleX(1.1292);">Farinha de trigo</span>
<span class="x" style="left:419px;top:207px;line-height:12px;font-size:10.8px;color:#000;transform:translateX(0.79px) scaleX(1.0597);">INSUM...</span>
<span class="x" style="left:485px;top:207px;line-height:12px;font-size:10.8px;color:#000;transform:translateX(0.45px) scaleX(1.0986);">Comprado</span>
<span class="x" style="left:700px;top:207px;line-height:12px;font-size:10.8px;color:#000;transform:translateX(0.60px) scaleX(1.1185);">Ativo</span>
<span class="x" style="left:90px;top:228px;line-height:12px;font-size:10.8px;color:#2c2c2c;transform:translateX(0.55px) scaleX(1.1330);">00002</span>
<span class="x" style="left:200px;top:228px;line-height:12px;font-size:10.8px;color:#2c2c2c;transform:translateX(0.52px) scaleX(1.0581);">Sal</span>
<span class="x" style="left:419px;top:228px;line-height:12px;font-size:10.8px;color:#2c2c2c;transform:translateX(0.79px) scaleX(1.0597);">INSUM...</span>
<span class="x" style="left:485px;top:228px;line-height:12px;font-size:10.8px;color:#2c2c2c;transform:translateX(0.45px) scaleX(1.0986);">Comprado</span>
<span class="x" style="left:700px;top:228px;line-height:12px;font-size:10.8px;color:#2c2c2c;transform:translateX(0.60px) scaleX(1.1185);">Ativo</span>
<span class="x" style="left:90px;top:250px;line-height:12px;font-size:10.8px;color:#2c2c2c;transform:translateX(0.55px) scaleX(1.1311);">00003</span>
<span class="x" style="left:200px;top:250px;line-height:12px;font-size:10.8px;color:#2c2c2c;transform:translateX(0.05px) scaleX(1.1149);">Fermento biológico</span>
<span class="x" style="left:419px;top:250px;line-height:12px;font-size:10.8px;color:#2c2c2c;transform:translateX(0.79px) scaleX(1.0597);">INSUM...</span>
<span class="x" style="left:485px;top:250px;line-height:12px;font-size:10.8px;color:#2c2c2c;transform:translateX(0.45px) scaleX(1.0986);">Comprado</span>
<span class="x" style="left:700px;top:250px;line-height:12px;font-size:10.8px;color:#2c2c2c;transform:translateX(0.60px) scaleX(1.1185);">Ativo</span>
<span class="x" style="left:90px;top:271px;line-height:12px;font-size:10.8px;color:#2c2c2c;transform:translateX(0.55px) scaleX(1.1253);">00004</span>
<span class="x" style="left:200px;top:271px;line-height:12px;font-size:10.8px;color:#2c2c2c;transform:translateX(0.46px) scaleX(1.0899);">Ovo</span>
<span class="x" style="left:419px;top:271px;line-height:12px;font-size:10.8px;color:#2c2c2c;transform:translateX(0.79px) scaleX(1.0597);">INSUM...</span>
<span class="x" style="left:485px;top:271px;line-height:12px;font-size:10.8px;color:#2c2c2c;transform:translateX(0.45px) scaleX(1.0986);">Comprado</span>
<span class="x" style="left:700px;top:271px;line-height:12px;font-size:10.8px;color:#2c2c2c;transform:translateX(0.60px) scaleX(1.1185);">Ativo</span>
<span class="x" style="left:90px;top:292px;line-height:12px;font-size:10.8px;color:#2c2c2c;transform:translateX(0.55px) scaleX(1.1291);">00005</span>
<span class="x" style="left:200px;top:292px;line-height:12px;font-size:10.8px;color:#2c2c2c;transform:translateX(0.44px) scaleX(1.1184);">Queijo</span>
<span class="x" style="left:419px;top:292px;line-height:12px;font-size:10.8px;color:#2c2c2c;transform:translateX(0.79px) scaleX(1.0597);">INSUM...</span>
<span class="x" style="left:485px;top:292px;line-height:12px;font-size:10.8px;color:#2c2c2c;transform:translateX(0.45px) scaleX(1.0986);">Comprado</span>
<span class="x" style="left:700px;top:292px;line-height:12px;font-size:10.8px;color:#2c2c2c;transform:translateX(0.60px) scaleX(1.1185);">Ativo</span>
<span class="x" style="left:90px;top:314px;line-height:12px;font-size:10.8px;color:#2c2c2c;transform:translateX(0.55px) scaleX(1.1311);">00006</span>
<span class="x" style="left:200px;top:314px;line-height:12px;font-size:10.8px;color:#2c2c2c;transform:translateX(0.06px) scaleX(1.1056);">Presunto</span>
<span class="x" style="left:419px;top:314px;line-height:12px;font-size:10.8px;color:#2c2c2c;transform:translateX(0.79px) scaleX(1.0597);">INSUM...</span>
<span class="x" style="left:485px;top:314px;line-height:12px;font-size:10.8px;color:#2c2c2c;transform:translateX(0.45px) scaleX(1.0986);">Comprado</span>
<span class="x" style="left:700px;top:314px;line-height:12px;font-size:10.8px;color:#2c2c2c;transform:translateX(0.60px) scaleX(1.1185);">Ativo</span>
<span class="x" style="left:90px;top:335px;line-height:12px;font-size:10.8px;color:#2c2c2c;transform:translateX(0.55px) scaleX(1.1330);">00007</span>
<span class="x" style="left:200px;top:335px;line-height:12px;font-size:10.8px;color:#2c2c2c;transform:translateX(0.46px) scaleX(1.0843);">Carne moída</span>
<span class="x" style="left:419px;top:335px;line-height:12px;font-size:10.8px;color:#2c2c2c;transform:translateX(0.79px) scaleX(1.0597);">INSUM...</span>
<span class="x" style="left:485px;top:335px;line-height:12px;font-size:10.8px;color:#2c2c2c;transform:translateX(0.45px) scaleX(1.0986);">Comprado</span>
<span class="x" style="left:700px;top:335px;line-height:12px;font-size:10.8px;color:#2c2c2c;transform:translateX(0.60px) scaleX(1.1185);">Ativo</span>
<span class="x" style="left:90px;top:356px;line-height:12px;font-size:10.8px;color:#2c2c2c;transform:translateX(0.55px) scaleX(1.1311);">00008</span>
<span class="x" style="left:200px;top:356px;line-height:12px;font-size:10.8px;color:#2c2c2c;transform:translateX(0.06px) scaleX(1.1068);">Frango desfiado</span>
<span class="x" style="left:419px;top:356px;line-height:12px;font-size:10.8px;color:#2c2c2c;transform:translateX(0.79px) scaleX(1.0597);">INSUM...</span>
<span class="x" style="left:485px;top:356px;line-height:12px;font-size:10.8px;color:#2c2c2c;transform:translateX(0.45px) scaleX(1.0986);">Comprado</span>
<span class="x" style="left:700px;top:356px;line-height:12px;font-size:10.8px;color:#2c2c2c;transform:translateX(0.60px) scaleX(1.1185);">Ativo</span>
<span class="x" style="left:90px;top:378px;line-height:12px;font-size:10.8px;color:#2c2c2c;transform:translateX(0.55px) scaleX(1.1330);">00009</span>
<span class="x" style="left:200px;top:378px;line-height:12px;font-size:10.8px;color:#2c2c2c;transform:translateX(0.05px) scaleX(1.1211);">Batata</span>
<span class="x" style="left:419px;top:378px;line-height:12px;font-size:10.8px;color:#2c2c2c;transform:translateX(0.79px) scaleX(1.0597);">INSUM...</span>
<span class="x" style="left:485px;top:378px;line-height:12px;font-size:10.8px;color:#2c2c2c;transform:translateX(0.45px) scaleX(1.0986);">Comprado</span>
<span class="x" style="left:700px;top:378px;line-height:12px;font-size:10.8px;color:#2c2c2c;transform:translateX(0.60px) scaleX(1.1185);">Ativo</span>
<span class="x" style="left:90px;top:399px;line-height:12px;font-size:10.8px;color:#2c2c2c;transform:translateX(0.55px) scaleX(1.1291);">00010</span>
<span class="x" style="left:200px;top:399px;line-height:12px;font-size:10.8px;color:#2c2c2c;transform:translateX(0.48px) scaleX(1.0483);">Cebola</span>
<span class="x" style="left:419px;top:399px;line-height:12px;font-size:10.8px;color:#2c2c2c;transform:translateX(0.79px) scaleX(1.0597);">INSUM...</span>
<span class="x" style="left:485px;top:399px;line-height:12px;font-size:10.8px;color:#2c2c2c;transform:translateX(0.45px) scaleX(1.0986);">Comprado</span>
<span class="x" style="left:700px;top:399px;line-height:12px;font-size:10.8px;color:#2c2c2c;transform:translateX(0.60px) scaleX(1.1185);">Ativo</span>
<span class="x" style="left:90px;top:420px;line-height:12px;font-size:10.8px;color:#2c2c2c;transform:translateX(0.53px) scaleX(1.1651);">00011</span>
<span class="x" style="left:200px;top:420px;line-height:12px;font-size:10.8px;color:#2c2c2c;transform:translateX(0.07px) scaleX(1.0916);">Massa para salgado</span>
<span class="x" style="left:419px;top:420px;line-height:12px;font-size:10.8px;color:#2c2c2c;transform:translateX(0.94px) scaleX(1.0086);">PRODU...</span>
<span class="x" style="left:485px;top:420px;line-height:12px;font-size:10.8px;color:#2c2c2c;transform:translateX(0.09px) scaleX(1.0734);">Fabricado</span>
<span class="x" style="left:700px;top:420px;line-height:12px;font-size:10.8px;color:#2c2c2c;transform:translateX(0.60px) scaleX(1.1185);">Ativo</span>
<span class="x" style="left:90px;top:442px;line-height:12px;font-size:10.8px;color:#2c2c2c;transform:translateX(0.55px) scaleX(1.1330);">00012</span>
<span class="x" style="left:200px;top:442px;line-height:12px;font-size:10.8px;color:#2c2c2c;transform:translateX(0.07px) scaleX(1.0905);">Farinha de rosca</span>
<span class="x" style="left:419px;top:442px;line-height:12px;font-size:10.8px;color:#2c2c2c;transform:translateX(0.79px) scaleX(1.0597);">INSUM...</span>
<span class="x" style="left:485px;top:442px;line-height:12px;font-size:10.8px;color:#2c2c2c;transform:translateX(0.45px) scaleX(1.0986);">Comprado</span>
<span class="x" style="left:700px;top:442px;line-height:12px;font-size:10.8px;color:#2c2c2c;transform:translateX(0.60px) scaleX(1.1185);">Ativo</span>
<span class="x" style="left:90px;top:463px;line-height:12px;font-size:10.8px;color:#2c2c2c;transform:translateX(0.55px) scaleX(1.1311);">00013</span>
<span class="x" style="left:200px;top:463px;line-height:12px;font-size:10.8px;color:#2c2c2c;transform:translateX(0.07px) scaleX(1.0992);">Embalagem para salgado congelado</span>
<span class="x" style="left:419px;top:463px;line-height:12px;font-size:10.8px;color:#2c2c2c;transform:translateX(0.93px) scaleX(1.0179);">EMBAL...</span>
<span class="x" style="left:485px;top:463px;line-height:12px;font-size:10.8px;color:#2c2c2c;transform:translateX(0.45px) scaleX(1.0986);">Comprado</span>
<span class="x" style="left:700px;top:463px;line-height:12px;font-size:10.8px;color:#2c2c2c;transform:translateX(0.60px) scaleX(1.1185);">Ativo</span>
<span class="x" style="left:90px;top:484px;line-height:12px;font-size:10.8px;color:#2c2c2c;transform:translateX(0.55px) scaleX(1.1253);">00014</span>
<span class="x" style="left:200px;top:484px;line-height:12px;font-size:10.8px;color:#2c2c2c;transform:translateX(0.44px) scaleX(1.1276);">Coxinha de frango e requeijão - 80g</span>
<span class="x" style="left:419px;top:484px;line-height:12px;font-size:10.8px;color:#2c2c2c;transform:translateX(0.93px) scaleX(1.0289);">FRITOS</span>
<span class="x" style="left:485px;top:484px;line-height:12px;font-size:10.8px;color:#2c2c2c;transform:translateX(0.09px) scaleX(1.0734);">Fabricado</span>
<span class="x" style="left:700px;top:484px;line-height:12px;font-size:10.8px;color:#2c2c2c;transform:translateX(0.60px) scaleX(1.1185);">Ativo</span>
<span class="x" style="left:90px;top:506px;line-height:12px;font-size:10.8px;color:#2c2c2c;transform:translateX(0.55px) scaleX(1.1291);">00015</span>
<span class="x" style="left:200px;top:506px;line-height:12px;font-size:10.8px;color:#2c2c2c;transform:translateX(0.05px) scaleX(1.1182);">Recheio de frango com requeijão</span>
<span class="x" style="left:419px;top:506px;line-height:12px;font-size:10.8px;color:#2c2c2c;transform:translateX(0.91px) scaleX(1.0490);">RECHEIO</span>
<span class="x" style="left:485px;top:506px;line-height:12px;font-size:10.8px;color:#2c2c2c;transform:translateX(0.09px) scaleX(1.0734);">Fabricado</span>
<span class="x" style="left:700px;top:506px;line-height:12px;font-size:10.8px;color:#2c2c2c;transform:translateX(0.60px) scaleX(1.1185);">Ativo</span>
<span class="x" style="left:1033px;top:112px;line-height:12px;font-size:10.8px;color:#555;transform:translateX(0.96px) scaleX(1.0745);">Código</span>
<span class="x" style="left:1033px;top:131px;line-height:12px;font-size:10.8px;color:#555;transform:translateX(0.98px) scaleX(1.0779);">Descrição</span>
<span class="x" style="left:1033px;top:150px;line-height:12px;font-size:10.8px;color:#555;transform:translateX(0.95px) scaleX(1.1119);">Descrição complementar</span>
<span class="x" style="left:1033px;top:169px;line-height:12px;font-size:10.8px;color:#555;transform:translateX(0.95px) scaleX(1.1096);">Grupo</span>
<span class="x" style="left:1033px;top:188px;line-height:12px;font-size:10.8px;color:#555;transform:translateX(0.94px) scaleX(1.1198);">Grupo do grupo</span>
<span class="x" style="left:1034px;top:207px;line-height:12px;font-size:10.8px;color:#555;transform:translateX(0.04px) scaleX(1.0088);">NCM</span>
<span class="x" style="left:1033px;top:226px;line-height:12px;font-size:10.8px;color:#555;transform:translateX(0.99px) scaleX(1.0752);">Estado</span>
<span class="x" style="left:1034px;top:245px;line-height:12px;font-size:10.8px;color:#555;transform:translateX(0.07px) scaleX(1.1474);">Tipo do item</span>
<span class="x" style="left:1034px;top:264px;line-height:12px;font-size:10.8px;color:#555;transform:translateX(0.07px) scaleX(1.1296);">Tipo contábil</span>
<span class="x" style="left:1033px;top:283px;line-height:12px;font-size:10.8px;color:#555;transform:translateX(0.81px) scaleX(1.1511);">Item vendável</span>
<span class="x" style="left:1033px;top:302px;line-height:12px;font-size:10.8px;color:#555;transform:translateX(0.84px) scaleX(1.1153);">Custo de aquisição/orçamentação fixo</span>
<span class="x" style="left:1033px;top:321px;line-height:12px;font-size:10.8px;color:#555;transform:translateX(0.83px) scaleX(1.1304);">Integrar com e-commerce/Mercos</span>
<span class="x" style="left:1033px;top:340px;line-height:12px;font-size:10.8px;color:#555;transform:translateX(0.95px) scaleX(1.0961);">Criados de</span>
<span class="x" style="left:1033px;top:359px;line-height:12px;font-size:10.8px;color:#555;transform:translateX(0.94px) scaleX(1.1351);">Estoque &lt; ressuprimento</span>
<span class="x" style="left:1033px;top:378px;line-height:12px;font-size:10.8px;color:#555;transform:translateX(0.97px) scaleX(1.0918);">Estocagem</span>
<span class="x" style="left:1033px;top:397px;line-height:12px;font-size:10.8px;color:#555;transform:translateX(0.99px) scaleX(1.0744);">Desenho</span>
<span class="x" style="left:1033px;top:416px;line-height:12px;font-size:10.8px;color:#555;transform:translateX(1.00px) scaleX(1.0619);">Revisão</span>
<span class="x" style="left:1034px;top:435px;line-height:12px;font-size:10.8px;color:#555;transform:translateX(0.00px) scaleX(1.0569);">Procedência</span>
<span class="x" style="left:1033px;top:454px;line-height:12px;font-size:10.8px;color:#555;transform:translateX(0.97px) scaleX(1.0979);">Endereço de estoque</span>
<span class="x" style="left:1033px;top:473px;line-height:12px;font-size:10.8px;color:#555;transform:translateX(0.96px) scaleX(1.0752);">Observações</span>
</body></html>
